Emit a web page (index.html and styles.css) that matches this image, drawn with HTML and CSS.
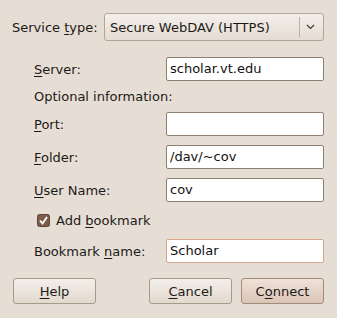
FILE: index.html
```html
<!DOCTYPE html>
<html>
  <head>
    <meta charset="utf-8">
    <title>Connect to Server</title>
    <link rel="stylesheet" href="styles.css">
  </head>
  <body>
    <div class="dialog">
      <div class="service-row">
        <label class="service-label">Service <u>t</u>ype:</label>
        <div class="combo">
          <span class="combo-text">Secure WebDAV (HTTPS)</span>
          <span class="combo-sep"></span>
          <svg class="combo-arrow" width="9" height="6" viewBox="0 0 9 6">
            <path d="M1 1 L4.5 4.5 L8 1" fill="none" stroke="#3c3a36" stroke-width="1.2"/>
          </svg>
        </div>
      </div>

      <div class="form">
        <label class="prop"><u>S</u>erver:</label>
        <div class="entry">scholar.vt.edu</div>

        <div class="section">Optional information:</div>

        <label class="prop"><u>P</u>ort:</label>
        <div class="entry"></div>

        <label class="prop"><u>F</u>older:</label>
        <div class="entry">/dav/~cov</div>

        <label class="prop"><u>U</u>ser Name:</label>
        <div class="entry">cov</div>

        <div class="check-row">
          <svg class="check" width="13" height="13" viewBox="0 0 13 13">
            <rect x="0.5" y="0.5" width="12" height="12" rx="2" fill="#7d5c4b" stroke="#5e4336"/>
            <path d="M3 6.5 L5.5 9.5 L10 3" fill="none" stroke="#fff" stroke-width="1.8"/>
          </svg>
          <span>Add <u>b</u>ookmark</span>
        </div>

        <label class="prop">Bookmark <u>n</u>ame:</label>
        <div class="entry focused">Scholar</div>
      </div>

      <div class="buttons">
        <button class="btn"><u>H</u>elp</button>
        <span class="spacer"></span>
        <button class="btn"><u>C</u>ancel</button>
        <button class="btn default">C<u>o</u>nnect</button>
      </div>
    </div>
  </body>
</html>
```

FILE: styles.css
```css
* {
  box-sizing: border-box;
}

body {
  margin: 0;
  padding: 0;
  background-color: #e6ded5;
  font-family: 'DejaVu Sans', 'Liberation Sans', sans-serif;
  font-size: 13px;
  color: #1c1a18;
}

u {
  text-decoration-thickness: 1px;
  text-underline-offset: 2px;
}

.dialog {
  padding: 13px 13px 0 12px;
}

.service-row {
  display: flex;
  align-items: center;
  height: 28px;
}

.service-label {
  width: 92px;
}

.combo {
  flex: 1;
  height: 28px;
  display: flex;
  align-items: center;
  border: 1px solid #b3a697;
  border-radius: 3px;
  background: linear-gradient(#f3efea, #e4dcd2);
  padding-left: 5px;
}

.combo-text {
  flex: 1;
}

.combo-sep {
  width: 1px;
  height: 20px;
  background-color: #bcb0a2;
  margin-right: 6px;
}

.combo-arrow {
  margin-right: 8px;
}

.form {
  margin-top: 16px;
  padding-left: 22px;
  display: grid;
  grid-template-columns: 132px 1fr;
  grid-template-rows: 24px 13px 24px 24px 24px 19px 24px;
  row-gap: 9px;
  align-items: center;
}

.section {
  grid-column: 1 / 3;
  line-height: 13px;
}

.entry {
  height: 24px;
  line-height: 22px;
  border: 1px solid #8e8071;
  border-radius: 2px;
  background-color: #fff;
  padding-left: 3px;
  color: #111;
}

.entry.focused {
  border-color: #d9a58a;
}

.check-row {
  grid-column: 1 / 3;
  display: flex;
  align-items: center;
  padding-left: 3px;
}

.check {
  margin-right: 6px;
}

.buttons {
  margin-top: 15px;
  display: flex;
  gap: 9px;
  padding-left: 1px;
}

.spacer {
  flex: 1;
}

.btn {
  width: 83px;
  height: 26px;
  font: inherit;
  color: #1c1a18;
  border: 1px solid #a89a8b;
  border-radius: 3px;
  background: linear-gradient(#f3efea 0%, #ebe4dc 50%, #e2d9ce 100%);
  padding: 0;
}

.btn.default {
  border-color: #a18b7b;
  background: linear-gradient(#efe2d9 0%, #e5d3c7 50%, #dac5b7 100%);
}
```
